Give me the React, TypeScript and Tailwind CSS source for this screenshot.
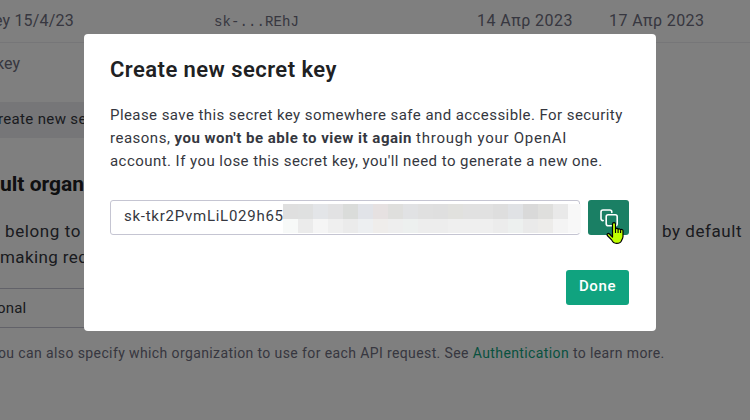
const topTiles = [
  "bg-[#dfdfdf]", "bg-[#dfe0e0]", "bg-[#e3e5e8]", "bg-[#e2e2e3]", "bg-[#dadcda]", "bg-[#e1e3e8]", "bg-[#e6e1e1]",
  "bg-[#dfdfdd]", "bg-[#e1e2e4]", "bg-[#e0e0e0]", "bg-[#dfdfdf]", "bg-[#e1e1de]", "bg-[#e1e1e1]", "bg-[#e1e1e1]",
  "bg-[#dedede]", "bg-[#e0e2e5]", "bg-[#d9d9d9]", "bg-[#dfdfdd]", "bg-[#e9e9e9]",
];

const bottomTiles = [
  "bg-[#f7f9f8]", "bg-[#ebebeb]", "bg-[#f5f5f5]", "bg-[#efefef]", "bg-[#ebebeb]", "bg-[#edeff1]", "bg-[#efedeb]",
  "bg-[#eeeeee]", "bg-[#edf0ef]", "bg-[#ededed]", "bg-[#ededed]", "bg-[#efefef]", "bg-[#efefef]", "bg-[#efefef]",
  "bg-[#ececec]", "bg-[#edf0ef]", "bg-[#eaeaea]", "bg-[#edecea]", "bg-[#f4f4f4]",
];

function CopyIcon() {
  return (
    <svg width="20" height="20" viewBox="0 0 20 20" fill="none" stroke="white" strokeWidth="1.6" strokeLinecap="round" strokeLinejoin="round">
      <rect x="7.2" y="6.8" width="11" height="11" rx="2" />
      <path d="M4.2 12.6H4a2 2 0 0 1-2-2V4a2 2 0 0 1 2-2h6.8a2 2 0 0 1 2 2v.4" />
    </svg>
  );
}

function HandCursor() {
  return (
    <svg className="absolute left-[18px] top-[22px]" width="18" height="22" viewBox="0 0 18 22">
      <path
        d="M6.5 13V2.2a1.5 1.5 0 0 1 3 0V7a1.4 1.4 0 0 1 2.6.5 1.4 1.4 0 0 1 2.5.6 1.3 1.3 0 0 1 2.4.8v5.6c0 1.6-.8 2.8-1.4 3.8-.6 2-2.6 3-5 3-2.5 0-4-1.2-4.8-3.2L1.3 13.5c-.8-1.5.8-2.7 2.2-1.5L6.5 15z"
        fill="#bfff00"
        stroke="black"
        strokeWidth="1.2"
        strokeLinejoin="round"
      />
      <path d="M9.5 7v4M12.1 8v3M14.6 8.6V11" stroke="black" strokeWidth="1.1" />
    </svg>
  );
}

function SecretInput() {
  return (
    <div className="flex h-[35px] w-[470px] items-center rounded-[3px] border border-[#c5c5d2] pl-[13px]">
      <span className="-mt-0.5 w-[159px] shrink-0 whitespace-nowrap text-[15px] tracking-[0.74px] text-[#353740]">sk-tkr2PvmLiL029h65</span>
      <div className="mt-0.5 flex h-[29px] shrink-0">
        <div className="w-[285px]">
          <div className="flex h-[15px]">
            {topTiles.map((tile, i) => (
              <div key={i} className={`h-full w-[15px] ${tile}`} />
            ))}
          </div>
          <div className="flex h-[14px]">
            {bottomTiles.map((tile, i) => (
              <div key={i} className={`h-full w-[15px] ${tile}`} />
            ))}
          </div>
        </div>
        <div className="w-[13px] bg-[#f8f8f8]" />
      </div>
    </div>
  );
}

function ApiKeysPage() {
  return (
    <div className="h-full whitespace-nowrap text-[16px] text-[#6e6e80]">
      <div className="flex h-[43px] items-center border-b border-[#ececf1]">
        <div className="flex w-[74px] shrink-0 justify-end tracking-[0.2px]">ey 15/4/23</div>
        <div className="ml-[140px] w-[263px] pt-0.5 font-['Liberation_Mono',monospace] text-[14px] tracking-[0.1px]">sk-...REhJ</div>
        <div className="w-[132px] tracking-[0.45px]">14 Απρ 2023</div>
        <div className="tracking-[0.4px]">17 Απρ 2023</div>
      </div>
      <div className="flex h-[59px] w-5 justify-end pt-[9px]">key</div>
      <div className="flex h-9 w-[120px] items-center bg-[#ececf1] pb-0.5 text-[15px] tracking-[0.35px] text-[#353740]">
        <span className="-ml-[2px]">reate new se</span>
      </div>
      <h2 className="mt-[32px] text-[21px] leading-7 font-bold text-[#202123]">ult organ</h2>
      <div className="mt-[20px] text-[17px] leading-[26px] text-[#353740]">
        <div className="flex w-[742px] justify-between pl-[5px]">
          <span className="tracking-[0.6px]">belong to</span>
          <span className="tracking-[0.55px]">d by default</span>
        </div>
        <div className="tracking-[0.4px]">making req</div>
      </div>
      <div className="mt-[18px] flex h-10 w-[300px] items-center border-y border-[#c5c5d2] text-[15px] tracking-[0.2px] text-[#353740]">
        <span className="-ml-[3px]">onal</span>
      </div>
      <p className="mt-[15px] -ml-0.5 text-[14px] leading-5 tracking-[0.39px]">
        ou can also specify which organization to use for each API request. See <span className="text-[#10a37f]">Authentication</span> to learn more.
      </p>
    </div>
  );
}

export default function App() {
  return (
    <div className="relative h-[420px] w-[750px] overflow-hidden bg-white font-['Roboto','Liberation_Sans',sans-serif]">
      <ApiKeysPage />
      <div className="absolute inset-0 bg-black/50">
        <div className="mt-[34px] ml-[84px] h-[297px] w-[572px] rounded bg-white pt-[21px] pl-[26px]">
          <h1 className="text-[22px] leading-[30px] font-semibold tracking-[0.45px] text-[#202123]">Create new secret key</h1>
          <div className="mt-[19px] text-[15px] leading-[23px] whitespace-nowrap text-[#353740]">
            <p className="tracking-[0.43px]">Please save this secret key somewhere safe and accessible. For security</p>
            <p className="tracking-[0.5px]">
              reasons, <strong className="font-bold">you won't be able to view it again</strong> <span className="tracking-[0.75px]">through your OpenAI</span>
            </p>
            <p className="tracking-[0.45px]">account. If you lose this secret key, you'll need to generate a new one.</p>
          </div>
          <div className="mt-[27px] flex gap-2">
            <SecretInput />
            <button className="relative flex h-[35px] w-[41px] items-center justify-center rounded-[3px] bg-[#1a7f64]">
              <CopyIcon />
              <HandCursor />
            </button>
          </div>
          <div className="mt-[35px] flex w-[519px] justify-end">
            <button className="h-[35px] w-[63px] rounded-[3px] bg-[#10a37f] pb-0.5 text-[15px] font-medium tracking-[0.6px] text-white">Done</button>
          </div>
        </div>
      </div>
    </div>
  );
}
